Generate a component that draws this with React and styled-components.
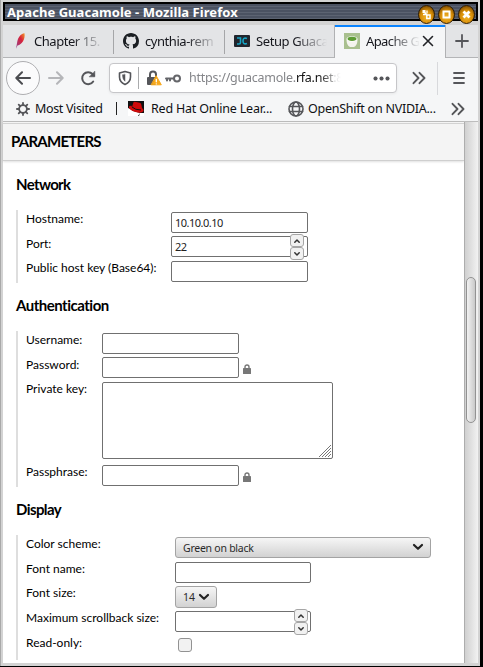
import React from "react";
import styled, { createGlobalStyle, css } from "styled-components";

const Global = createGlobalStyle`
  * { box-sizing: border-box; }
  html, body { margin: 0; padding: 0; background: #000; overflow: hidden; }
  body { font-family: "Noto Sans", sans-serif; }
`;

/* ---------- window frame ---------- */
const Desktop = styled.div`
  width: 483px; height: 667px; background: #000;
`;
const Window = styled.div`
  width: 480px; height: 666px; background: #d3d3d3;
  border-left: 1px solid #a9a9a9;
  padding: 2px 2px 3px;
  display: flex; flex-direction: column;
`;
const TitleBar = styled.div`
  height: 19px; flex: none; border: 2px solid #000; margin-bottom: 4px;
  background: repeating-linear-gradient(180deg, #4b5262 0 2px, #5c6372 2px 3px);
  display: flex; align-items: center; justify-content: space-between;
  padding-left: 2px;
`;
const Title = styled.div`
  color: #fff; font-weight: 700; font-size: 13px; line-height: 15px;
  white-space: nowrap; letter-spacing: 0.05px; padding-top: 1px;
`;
const Controls = styled.div`
  display: flex; gap: 3px; margin: 6px 1px 0 0; position: relative; z-index: 1;
`;
const Knob = styled.svg`
  display: block; width: 17px; height: 19px;
`;

/* ---------- tabs ---------- */
const Tabs = styled.div`
  height: 33px; flex: none; background: #e3e4e6; display: flex;
  border-bottom: 1px solid #b4b5b7;
`;
const Tab = styled.div`
  width: ${p => p.$w}px; flex: none; height: 33px; display: flex; align-items: center;
  padding: 0 0 1px ${p => p.$pad}px; position: relative;
  ${p => p.$active && css`
    background: #f5f6f7; border-left: 1px solid #b0b1b3; border-right: 1px solid #b0b1b3;
    box-shadow: inset 0 2px #0a84ff;
  `}
  ${p => p.$divider && css`
    &::after { content: ""; position: absolute; right: 0; top: 5px; width: 1px; height: 24px; background: #a5a6a8; }
  `}
`;
const TabIcon = styled.svg`
  width: 16px; height: 16px; flex: none; display: block; margin-right: ${p => p.$gap || 6}px;
`;
const TabText = styled.div`
  width: ${p => p.$w}px; flex: none; overflow: hidden; white-space: nowrap;
  font-size: 13px; line-height: 18px; color: #15161c; letter-spacing: ${p => p.$ls || 0}px;
  -webkit-mask-image: linear-gradient(90deg, #000 ${p => p.$w - 32}px, transparent ${p => p.$w}px);
  mask-image: linear-gradient(90deg, #000 ${p => p.$w - 32}px, transparent ${p => p.$w}px);
`;
const NewTab = styled.div`
  flex: 1; display: flex; align-items: center; justify-content: center; padding-bottom: 1px;
`;

/* ---------- navigation ---------- */
const Chrome = styled.div`
  flex: none; background: #f5f6f7; height: 64px; border-bottom: 1px solid #bdbdbd;
`;
const NavBar = styled.div`
  height: 40px; display: flex; align-items: center; padding-left: 3px;
`;
const BackButton = styled.div`
  width: 34px; height: 34px; border-radius: 50%; border: 1px solid #aeaeb1; background: #fbfbfc;
  display: flex; align-items: center; justify-content: center;
`;
const Glyph = styled.svg`
  display: block; flex: none; fill: none; stroke: ${p => p.$c || "#4c4d51"};
  stroke-width: ${p => p.$sw || 2}; stroke-linecap: round; stroke-linejoin: round;
  margin-left: ${p => p.$ml || 0}px;
`;
const UrlBar = styled.div`
  width: 288px; height: 30px; margin-left: 13px; border: 1px solid #c6c6c9; border-radius: 4px;
  background: #fff; display: flex; align-items: center; padding-left: 8px;
  box-shadow: 0 1px 3px rgba(0,0,0,.06);
`;
const Line = styled.div`
  width: 1px; height: ${p => p.$h}px; background: ${p => p.$c}; margin-left: ${p => p.$ml}px; flex: none;
`;
const Url = styled.div`
  margin-left: 8px; width: 156px; flex: none; overflow: hidden; white-space: nowrap;
  font-size: 12.5px; line-height: 20px; color: #85868a; letter-spacing: -0.25px;
  -webkit-mask-image: linear-gradient(90deg, #000 130px, transparent 152px);
  mask-image: linear-gradient(90deg, #000 130px, transparent 152px);
  b { font-weight: 400; color: #111; }
`;
const Bookmarks = styled.div`
  height: 21px; display: flex; align-items: center; padding-left: 13px;
`;
const BookmarkIcon = styled.svg`
  display: block; flex: none; width: 16px; height: 15px; margin-left: 11px;
`;
const BookmarkText = styled.div`
  font-size: 12.5px; line-height: 18px; color: #101114; white-space: nowrap;
  margin-left: ${p => p.$ml}px; width: ${p => p.$w}px; flex: none; letter-spacing: ${p => p.$ls || 0}px;
`;

/* ---------- page ---------- */
const Page = styled.div`
  flex: 1; min-height: 0; display: flex; background: #fff;
`;
const Content = styled.div`
  flex: 1; min-width: 0; font-family: Lato, "Open Sans", sans-serif; color: #000; background: #fff;
`;
const ParamHeader = styled.div`
  height: 39px; border-top: 1px solid #f4f4f4; background: #f4f4f4;
  border-bottom: 1px solid #cfcfcf; box-shadow: inset 0 1px #d2d2d2, 0 1px 2px rgba(0,0,0,.12);
  padding: 0 0 1px 8px; display: flex; align-items: center;
  font-size: 15px; font-weight: 700; letter-spacing: -0.75px;
`;
const Heading = styled.h3`
  margin: ${p => p.$top}px 0 ${p => p.$bottom}px 13px; height: 20px; line-height: 20px;
  font-size: 15px; font-weight: 700; letter-spacing: ${p => p.$ls}px;
`;
const Fields = styled.div`
  margin-left: 13px; border-left: 2px solid #dedede; padding-left: 8px;
  display: grid; grid-template-columns: ${p => p.$label}px 1fr; grid-template-rows: ${p => p.$rows};
`;
const Label = styled.label`
  font-size: 12px; line-height: 18px; white-space: nowrap; letter-spacing: ${p => p.$ls || 0}px;
`;
const Cell = styled.div`
  padding-top: ${p => p.$t ?? 2}px; display: flex; align-items: flex-start;
`;
const Box = styled.div`
  position: relative; width: ${p => p.$w || 137}px; height: ${p => p.$h || 21}px;
  border: 1px solid #707070; border-radius: 2px; background: #fff;
  font: 11px/19px "Noto Sans", sans-serif; letter-spacing: -0.5px; color: #222; padding: 0 3px;
`;
const Spinner = styled.div`
  position: absolute; top: -3px; right: ${p => p.$right}px; width: 14px; height: 26px;
`;
const SpinButton = styled.div`
  height: 13px; border: 1px solid #a6a6a6; border-radius: 3px; background: #f1f1f1;
  display: flex; align-items: center; justify-content: center;
`;
const Select = styled.div`
  width: ${p => p.$w}px; height: ${p => p.$h}px; border: 1px solid #a3a3a3; border-radius: 3px;
  background: linear-gradient(#f6f6f6, #d2d2d2); display: flex; align-items: center;
  justify-content: space-between; padding: 0 6px 0 7px;
  font: 10.5px/18px "Noto Sans", sans-serif; letter-spacing: ${p => p.$ls || 0}px; color: #2a2a2a;
  svg { margin-bottom: 1px; }
`;
const Check = styled.div`
  width: 14px; height: 14px; margin: 2px 0 0 3px; border: 1px solid #929292; border-radius: 3px; background: #f2f2f2;
`;
const Lock = styled.svg`
  display: block; width: 8px; height: 10px; margin: 7px 0 0 4px;
`;
const Grip = styled.svg`
  position: absolute; right: 1px; bottom: 1px; width: 12px; height: 12px;
`;
const ScrollTrack = styled.div`
  width: 14px; flex: none; border-left: 1px solid #adadad;
  background: linear-gradient(90deg, #d0d0d0, #f2f2f2); padding: 155px 2px 0 1px;
`;
const ScrollThumb = styled.div`
  width: 10px; height: 146px; border: 1px solid #929292; border-radius: 5px;
  background: linear-gradient(90deg, #f2f2f2, #c9c9c9);
`;

const WindowKnob = ({ children }) => (
  <Knob viewBox="0 0 17 19">
    <defs>
      <radialGradient id="amber" cx=".5" cy=".65" r=".6">
        <stop offset="0" stopColor="#f0b32c" /><stop offset=".6" stopColor="#d98f08" /><stop offset="1" stopColor="#8c5600" />
      </radialGradient>
    </defs>
    <ellipse cx="8.5" cy="9.5" rx="8" ry="9" fill="url(#amber)" stroke="#2d1c05" />
    {children}
  </Knob>
);

const NumberSpinner = ({ right }) => (
  <Spinner $right={right}>
    <SpinButton><Glyph width="6" height="4" viewBox="0 0 6 4" $sw={1.5} $c="#333"><path d="M.8 3.2 3 1l2.200 2.200" /></Glyph></SpinButton>
    <SpinButton><Glyph width="6" height="4" viewBox="0 0 6 4" $sw={1.5} $c="#333"><path d="M.8.8 3 3 5.200.8" /></Glyph></SpinButton>
  </Spinner>
);
const Chevron = () => (
  <Glyph width="12" height="8" viewBox="0 0 12 8" $c="#222" $sw={2.2}><path d="M2 2l4 3.800L10 2" /></Glyph>
);
const Padlock = () => (
  <Lock viewBox="0 0 8 10"><path d="M2 5V3a2 2 0 0 1 4 0v2" fill="none" stroke="#777" strokeWidth="1.400" /><rect y="4" width="8" height="6" rx=".6" fill="#777" /></Lock>
);
const DoubleChevron = ({ ml }) => (
  <Glyph width="14" height="14" viewBox="0 0 14 14" $ml={ml} $c="#555659" $sw={1.9}><path d="M1.500 1.800 6.500 7l-5 5.200M7.500 1.800l5 5.200-5 5.200" /></Glyph>
);

export default function App() {
  return (
    <Desktop>
      <Global />
      <Window>
        <TitleBar>
          <Title>Apache Guacamole - Mozilla Firefox</Title>
          <Controls>
            <WindowKnob><path d="M4.500 5h3v3h-3z" fill="#fff" /><path d="M6 6.500l3 4M5 9.500h3M9 5.500v3" stroke="#fff" strokeWidth="1.300" /><rect x="8.800" y="10" width="3.200" height="3.500" fill="none" stroke="#fff" strokeWidth="1.500" /></WindowKnob>
            <WindowKnob><rect x="5.500" y="6.500" width="6" height="6" fill="none" stroke="#fff" strokeWidth="2" /></WindowKnob>
            <WindowKnob><path d="M5.500 6.500l6 6m0-6l-6 6" stroke="#fff" strokeWidth="2.800" /></WindowKnob>
          </Controls>
        </TitleBar>

        <Tabs>
          <Tab $w={111} $pad={10} $divider>
            <TabIcon viewBox="0 0 16 16" $gap={5}>
              <defs><linearGradient id="feather" x1="1" y1="0" x2="0" y2="1"><stop offset="0" stopColor="#f39a28" /><stop offset=".4" stopColor="#d8213a" /><stop offset="1" stopColor="#8b4795" /></linearGradient></defs>
              <path d="M11.500.2C7.500.8 5 4.500 4.200 9L3 15.800l1.500-3.200C9 11 12.500 6.500 11.500.2z" fill="url(#feather)" />
            </TabIcon>
            <TabText $w={70} $ls={-0.45}>Chapter 15.</TabText>
          </Tab>
          <Tab $w={111} $pad={9} $divider>
            <TabIcon viewBox="0 0 16 16">
              <path fill="#1b1f23" fillRule="evenodd" d="M8 0C3.580 0 0 3.580 0 8c0 3.540 2.290 6.530 5.470 7.590.4.070.55-.17.55-.38 0-.19-.01-.82-.01-1.490-2.010.37-2.530-.49-2.690-.94-.09-.23-.48-.94-.82-1.130-.28-.15-.68-.52-.01-.53.63-.01 1.080.58 1.230.82.72 1.210 1.870.87 2.330.66.07-.52.28-.87.51-1.070-1.780-.2-3.640-.89-3.640-3.950 0-.87.31-1.590.82-2.150-.08-.2-.36-1.020.08-2.120 0 0 .67-.21 2.200.82.64-.18 1.320-.27 2-.27s1.360.09 2 .27c1.530-1.040 2.200-.82 2.200-.82.44 1.100.16 1.920.08 2.120.51.56.82 1.270.82 2.150 0 3.070-1.870 3.750-3.650 3.950.29.25.54.73.54 1.480 0 1.070-.01 1.930-.01 2.200 0 .21.15.46.55.38A8.010 8.010 0 0 0 16 8c0-4.420-3.580-8-8-8z" />
            </TabIcon>
            <TabText $w={73} $ls={-0.45}>cynthia-rem</TabText>
          </Tab>
          <Tab $w={109} $pad={9}>
            <TabIcon viewBox="0 0 16 16">
              <rect y="2" width="16" height="12" rx="1" fill="#20252d" />
              <path d="M3 5h3.500v4.500Q6.500 11 5 11H3M13 5.500Q9 4 9 8t4 2.500" fill="none" stroke="#16a3c4" strokeWidth="1.600" />
            </TabIcon>
            <TabText $w={71} $ls={-0.4}>Setup Guaca</TabText>
          </Tab>
          <Tab $w={112} $pad={9} $active>
            <TabIcon viewBox="0 0 16 16">
              <rect width="16" height="16" fill="#a9c08f" />
              <path d="M2.500 6.500h11q0 6-3.500 7.500H6q-3.500-1.500-3.500-7.500z" fill="#f4f4ee" />
              <ellipse cx="8" cy="6" rx="5.500" ry="2.800" fill="#fff" /><ellipse cx="8" cy="5.800" rx="4.500" ry="2.100" fill="#5d9c34" />
            </TabIcon>
            <TabText $w={54} $ls={-0.6}>Apache G</TabText>
            <Glyph width="12" height="12" viewBox="0 0 12 12" $ml={2} $c="#222327" $sw={1.600}><path d="M1.500 1.500l9 9m0-9l-9 9" /></Glyph>
          </Tab>
          <NewTab><Glyph width="14" height="14" viewBox="0 0 14 14" $c="#55565a" $sw={1.800}><path d="M7 1v12M1 7h12" /></Glyph></NewTab>
        </Tabs>

        <Chrome>
          <NavBar>
            <BackButton><Glyph width="16" height="14" viewBox="0 0 16 14"><path d="M15 7H1.500M7 1.300 1.300 7 7 12.700" /></Glyph></BackButton>
            <Glyph width="16" height="14" viewBox="0 0 16 14" $ml={8} $c="#b5b6b9"><path d="M1 7h13.500M9 1.300 14.700 7 9 12.700" /></Glyph>
            <Glyph width="16" height="16" viewBox="0 0 16 16" $ml={16} $c="#55565a"><path d="M13.200 11.500A6 6 0 1 1 12.500 4L14 5.500" /><path d="M14.800 1.500v5.300H9.500z" fill="#55565a" strokeWidth=".6" /></Glyph>
            <UrlBar>
              <Glyph width="14" height="16" viewBox="0 0 14 16" $c="#55565a" $sw={1.600}><path d="M7 1.500 12.500 3v4q0 5-5.500 7.500Q1.500 12 1.500 7V3z" /><path d="M7 4.500v6.800Q4.500 9.500 4.500 5z" fill="#55565a" strokeWidth=".5" /></Glyph>
              <Line $h={22} $c="#aaabad" $ml={6} />
              <Glyph width="16" height="16" viewBox="0 0 16 16" $ml={7} $c="#55565a" $sw={2}>
                <path d="M4 7V4.500a3 3 0 0 1 6 0V7" /><rect x="2" y="8" width="8" height="6" fill="#55565a" />
                <path d="M10.300 6 15.300 14.800H5.500z" fill="#f7a81b" stroke="#f7a81b" strokeWidth="1" /><path d="M10.300 9.300v2.500M10.300 13.800v.1" stroke="#fff" strokeWidth="1.300" />
              </Glyph>
              <Glyph width="16" height="9" viewBox="0 0 16 9" $ml={3} $c="#65666a" $sw={2}><circle cx="12" cy="4.500" r="3" /><path d="M9 4.500H1M2 4.500v2M5 4.500v2" /></Glyph>
              <Url>https://guacamole.<b>rfa.net</b>:8</Url>
              <Glyph width="17" height="5" viewBox="0 0 17 5" $ml={28} $sw={0.1} $c="#55565a"><g fill="#55565a"><circle cx="2.500" cy="2.500" r="2" /><circle cx="8.500" cy="2.500" r="2" /><circle cx="14.500" cy="2.500" r="2" /></g></Glyph>
            </UrlBar>
            <DoubleChevron ml={15} />
            <Line $h={33} $c="#d8d9dc" $ml={11} />
            <Glyph width="12" height="14" viewBox="0 0 12 14" $ml={15} $c="#55565a" $sw={1.800}><path d="M1 2h10M1 7h10M1 12h10" /></Glyph>
          </NavBar>
          <Bookmarks>
            <Glyph width="14" height="14" viewBox="0 0 14 14" $c="#55565a" $sw={1.800}><circle cx="7" cy="7" r="3.900" /><path d="M7 3V.9M7 11v2.100M3 7H.9M11 7h2.100M4.200 4.200 2.700 2.700M9.800 4.200l1.500-1.500M4.200 9.800l-1.500 1.500M9.800 9.800l1.500 1.500" /></Glyph>
            <BookmarkText $ml={5} $w={69} $ls={-0.35}>Most Visited</BookmarkText>
            <Line $h={13} $c="#222" $ml={12} />
            <BookmarkIcon viewBox="0 0 16 15">
              <rect width="16" height="15" fill="#111" />
              <path d="M0 7q3 1 5 3l7 2-2 3H0zM12 12h4v3h-5z" fill="#fff" />
              <path d="M4 6 5.500 1.200Q6.200.3 8 1l3.500.8Q13 2 13.300 3.500L14 7q2 1.500 1.500 3-2 3-8 1Q1 9 .8 6q.5-1.500 2.700-1.200z" fill="#cf0a0a" />
              <path d="M4 6q3 3 9 3" fill="none" stroke="#111" strokeWidth="1" />
            </BookmarkIcon>
            <BookmarkText $ml={7} $w={124} $ls={-0.2}>Red Hat Online Lear...</BookmarkText>
            <Glyph width="16" height="16" viewBox="0 0 16 16" $ml={13} $c="#55565a" $sw={1.600}><circle cx="8" cy="8" r="7" /><ellipse cx="8" cy="8" rx="3.500" ry="7" /><path d="M1.500 5.500h13M1.500 10.500h13" /></Glyph>
            <BookmarkText $ml={4} $w={128} $ls={-0.25}>OpenShift on NVIDIA...</BookmarkText>
            <DoubleChevron ml={15} />
          </Bookmarks>
        </Chrome>

        <Page>
          <Content>
            <ParamHeader>PARAMETERS</ParamHeader>
            <Heading $top={13} $bottom={16} $ls={-0.65}>Network</Heading>
            <Fields $label={145} $rows="25px 24px 24px">
              <Label>Hostname:</Label><Cell><Box>10.10.0.10</Box></Cell>
              <Label>Port:</Label><Cell $t={1}><Box>22<NumberSpinner right={3} /></Box></Cell>
              <Label>Public host key (Base64):</Label><Cell><Box /></Cell>
            </Fields>
            <Heading $top={12} $bottom={16} $ls={-0.5}>Authentication</Heading>
            <Fields $label={76} $rows="25px 24px 83px 24px">
              <Label>Username:</Label><Cell><Box /></Cell>
              <Label>Password:</Label><Cell $t={1}><Box /><Padlock /></Cell>
              <Label>Private key:</Label>
              <Cell><Box $w={231} $h={77}><Grip viewBox="0 0 12 12"><path d="M0 12 12 0M3 12l9-9M6 12l6-6M9 12l3-3" stroke="#777" fill="none" /></Grip></Box></Cell>
              <Label>Passphrase:</Label><Cell><Box /><Padlock /></Cell>
            </Fields>
            <Heading $top={12} $bottom={16} $ls={-0.6}>Display</Heading>
            <Fields $label={149} $rows="25px 24px 25px 25px 26px">
              <Label>Color scheme:</Label><Cell><Select $w={256} $h={21} $ls={-0.25}>Green on black<Chevron /></Select></Cell>
              <Label>Font name:</Label><Cell><Box $w={136} /></Cell>
              <Label>Font size:</Label><Cell><Select $w={42} $h={22}>14<Chevron /></Select></Cell>
              <Label>Maximum scrollback size:</Label><Cell><Box $w={136}><NumberSpinner right={2} /></Box></Cell>
              <Label>Read-only:</Label><Cell><Check /></Cell>
            </Fields>
          </Content>
          <ScrollTrack><ScrollThumb /></ScrollTrack>
        </Page>
      </Window>
    </Desktop>
  );
}
